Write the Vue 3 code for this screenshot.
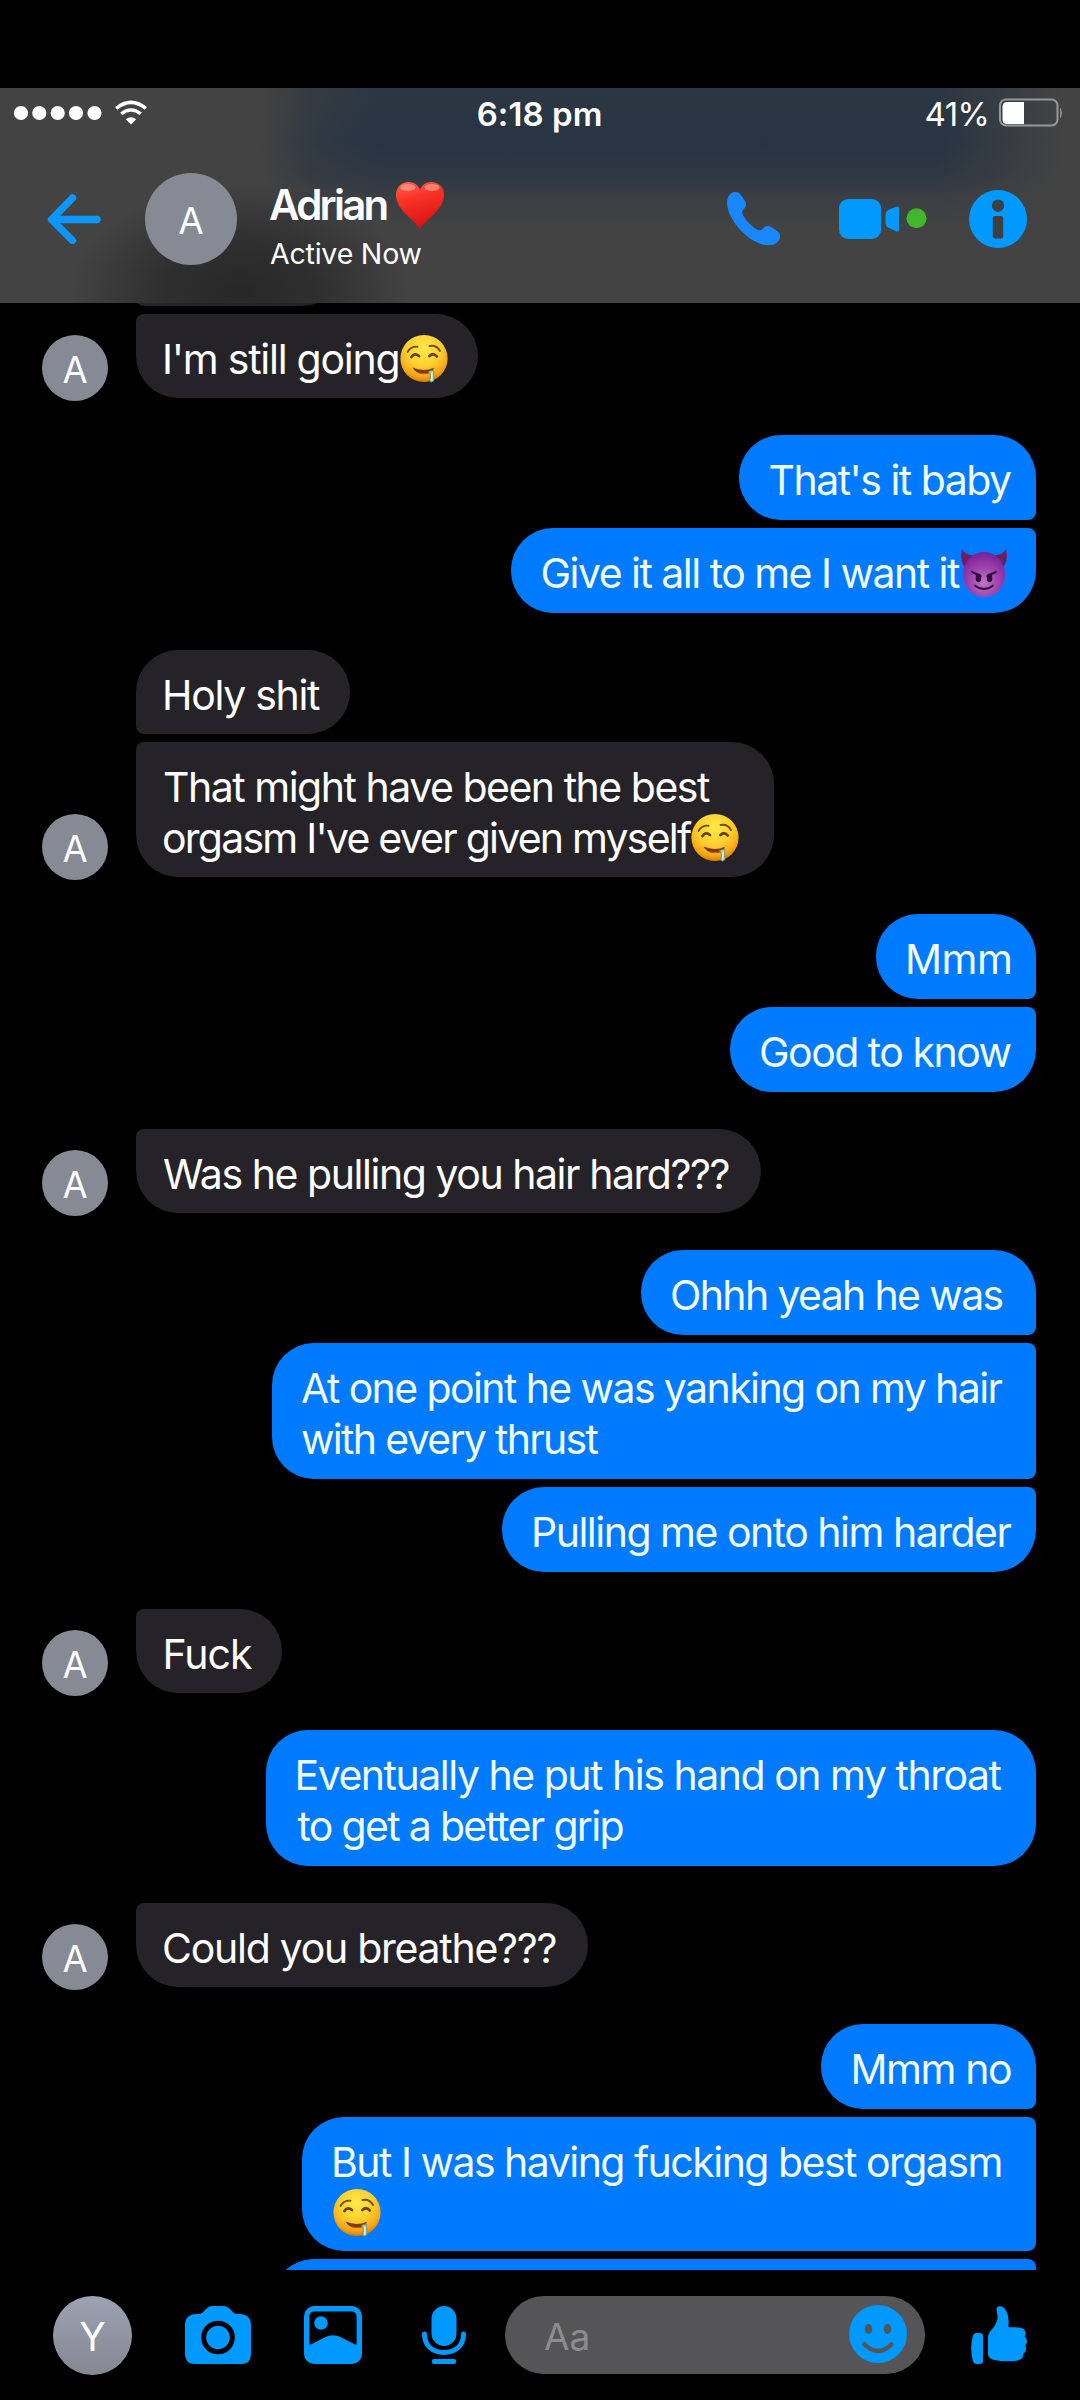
<script setup>
import { h } from 'vue'

const FAMILY = 'Inter, "Liberation Sans", sans-serif'
const ctx = document.createElement('canvas').getContext('2d')

// Tracking and side bearing that make a run of text span `width` pixels of ink.
function fit(text, width, size = 41, weight = 400) {
  ctx.font = `${weight} ${size}px ${FAMILY}`
  const m = ctx.measureText(text)
  const ink = m.actualBoundingBoxLeft + m.actualBoundingBoxRight
  const tracking = text.length > 1 ? (width - ink) / (text.length - 1) : 0
  return {
    letterSpacing: tracking.toFixed(3) + 'px',
    marginLeft: m.actualBoundingBoxLeft.toFixed(2) + 'px',
    marginRight: (-tracking).toFixed(3) + 'px'
  }
}

const groups = [
  {
    from: 'them',
    bubbles: [
      { w: 208, h: 84, cls: 'tail-both above', pad: 28, lines: [] },
      { w: 342, h: 84, cls: 'tail-top', pad: 29, lines: [{ t: "I'm still going", w: 232.5, e: 'drool' }] }
    ]
  },
  {
    from: 'me',
    bubbles: [
      { w: 297, h: 85, cls: 'tail-bottom', pad: 30.5, lines: [{ t: "That's it baby", w: 241.5 }] },
      { w: 525, h: 85, cls: 'tail-top', pad: 31.5, lines: [{ t: 'Give it all to me I want it', w: 417.5, e: 'devil' }] }
    ]
  },
  {
    from: 'them',
    bubbles: [
      { w: 214, h: 84, cls: 'tail-bottom', pad: 29, lines: [{ t: 'Holy shit', w: 155 }] },
      {
        w: 638, h: 135, cls: 'tail-top', pad: 28,
        lines: [
          { t: 'That might have been the best', w: 546 },
          { t: "orgasm I've ever given myself", w: 528, e: 'drool' }
        ]
      }
    ]
  },
  {
    from: 'me',
    bubbles: [
      { w: 160, h: 85, cls: 'tail-bottom', pad: 32, lines: [{ t: 'Mmm', w: 102 }] },
      { w: 306, h: 85, cls: 'tail-top', pad: 31, lines: [{ t: 'Good to know', w: 250.5 }] }
    ]
  },
  {
    from: 'them',
    bubbles: [{ w: 625, h: 84, cls: 'tail-top', pad: 28, lines: [{ t: 'Was he pulling you hair hard???', w: 564.5 }] }]
  },
  {
    from: 'me',
    bubbles: [
      { w: 395, h: 85, cls: 'tail-bottom', pad: 31, lines: [{ t: 'Ohhh yeah he was', w: 330.5 }] },
      {
        w: 764, h: 136, cls: 'tail-both', pad: 30,
        lines: [
          { t: 'At one point he was yanking on my hair', w: 700.5 },
          { t: 'with every thrust', w: 296.5 }
        ]
      },
      { w: 534, h: 85, cls: 'tail-top', pad: 32, lines: [{ t: 'Pulling me onto him harder', w: 477.5 }] }
    ]
  },
  {
    from: 'them',
    bubbles: [{ w: 145.5, h: 84, cls: 'tail-top', pad: 29.5, lines: [{ t: 'Fuck', w: 86.5 }] }]
  },
  {
    from: 'me',
    bubbles: [
      {
        w: 770, h: 136, cls: '', pad: 31.5,
        lines: [
          { t: 'Eventually he put his hand on my throat', w: 704 },
          { t: 'to get a better grip', w: 326 }
        ]
      }
    ]
  },
  {
    from: 'them',
    bubbles: [{ w: 452, h: 84, cls: 'tail-top', pad: 28, lines: [{ t: 'Could you breathe???', w: 391.5 }] }]
  },
  {
    from: 'me',
    bubbles: [
      { w: 215, h: 85, cls: 'tail-bottom', pad: 32.5, lines: [{ t: 'Mmm no', w: 157.5 }] },
      {
        w: 734, h: 134, cls: 'tail-both', pad: 32,
        lines: [
          { t: 'But I was having fucking best orgasm', w: 666.5 },
          { t: '', w: 0, e: 'drool' }
        ]
      },
      { w: 764, h: 85, cls: 'tail-both', pad: 31, lines: [] }
    ]
  }
]

const DroolFace = () =>
  h('svg', { viewBox: '0 0 48 48', width: 48, height: 49 }, [
    h('circle', { cx: 24, cy: 24, r: 23.6, fill: 'url(#faceFill)' }),
    h('g', { fill: 'none', stroke: '#7a4a08', 'stroke-width': 1.9, 'stroke-linecap': 'round' }, [
      h('path', { d: 'M7.5 17.5 Q11 11.5 17.5 12.2' }),
      h('path', { d: 'M29.5 11.5 Q36.5 10 40 16.5' })
    ]),
    h('g', { fill: 'none', stroke: '#6b3f08', 'stroke-width': 2.8, 'stroke-linecap': 'round' }, [
      h('path', { d: 'M11.5 22.5 Q14.5 17.8 19 21.5' }),
      h('path', { d: 'M29.5 21.5 Q33.5 17.8 36.8 22' })
    ]),
    h('path', { d: 'M12.5 33 Q23.5 37.8 34 33.2 Q32.5 39.6 23.5 39.6 Q15.5 39.2 12.5 33Z', fill: '#7a3d08' }),
    h('path', { d: 'M17 37.4 Q24 39.4 30 37.4 Q27 39.8 23 39.8 Q19.5 39.4 17 37.4Z', fill: '#c8503c' }),
    h('path', { d: 'M28.5 37 Q31 35.5 33.8 36 Q33.5 40 34 46 Q31.5 49 29.5 46.5 Q31 42 30 39.5Z', fill: '#a9c6a8', stroke: '#6f8a6a', 'stroke-width': 0.7 }),
    h('path', { d: 'M32 38 L31.8 46', stroke: '#f3fff8', 'stroke-width': 1.2 })
  ])

const DevilFace = () =>
  h('svg', { viewBox: '0 0 51 50', width: 50, height: 50 }, [
    h('path', { d: 'M3 1 Q7 7 16 7 L7 20 Q0 13 3 1Z', fill: '#6d1d60' }),
    h('path', { d: 'M48 1 Q44 7 35 7 L44 20 Q51 13 48 1Z', fill: '#6d1d60' }),
    h('ellipse', { cx: 25.5, cy: 26.5, rx: 21.5, ry: 23, fill: 'url(#devilFill)' }),
    h('g', { fill: 'none', stroke: '#35083c', 'stroke-width': 2.2, 'stroke-linecap': 'round' }, [
      h('path', { d: 'M13.5 24 L22 28' }),
      h('path', { d: 'M37.5 24 L29 28' }),
      h('path', { d: 'M16.5 38 Q25.5 45 34.5 38' })
    ]),
    h('ellipse', { cx: 19.8, cy: 30, rx: 2.8, ry: 4.4, fill: '#35083c' }),
    h('ellipse', { cx: 31.2, cy: 30, rx: 2.8, ry: 4.4, fill: '#35083c' })
  ])

const faces = { drool: DroolFace, devil: DevilFace }
</script>

<template>
  <div class="screen">
    <svg class="defs" width="0" height="0">
      <defs>
        <radialGradient id="faceFill" cx="0.48" cy="0.3" r="0.72">
          <stop offset="0" stop-color="#ffe94a" />
          <stop offset="0.5" stop-color="#ffd02e" />
          <stop offset="0.82" stop-color="#f7a415" />
          <stop offset="1" stop-color="#cf7206" />
        </radialGradient>
        <radialGradient id="devilFill" cx="0.5" cy="0.68" r="0.66">
          <stop offset="0" stop-color="#bd78c6" />
          <stop offset="0.5" stop-color="#9f45b0" />
          <stop offset="1" stop-color="#7c2096" />
        </radialGradient>
        <linearGradient id="heartFill" x1="0" y1="0" x2="0.3" y2="1">
          <stop offset="0" stop-color="#ff6a55" />
          <stop offset="0.4" stop-color="#fb3327" />
          <stop offset="1" stop-color="#d81414" />
        </linearGradient>
      </defs>
    </svg>

    <header class="header">
      <div class="status">
        <svg class="signal" width="150" height="28" viewBox="0 0 150 28">
          <g fill="#fff">
            <circle cx="21" cy="13" r="7.1" /><circle cx="39.3" cy="13" r="7.1" />
            <circle cx="57.7" cy="13" r="7.1" /><circle cx="76" cy="13" r="7.1" />
            <circle cx="94.5" cy="13" r="7.1" />
            <path d="M131 24.6 L125.8 19.3 Q131 15.3 136.2 19.3Z" />
          </g>
          <g fill="none" stroke="#fff" stroke-width="3.6">
            <path d="M116.2 8.3 Q131 -3.7 145.8 8.3" />
            <path d="M121.2 13.8 Q131 6.2 140.8 13.8" />
          </g>
        </svg>
        <span class="time"><span :style="fit('6:18 pm', 123, 33, 600)">6:18 pm</span></span>
        <div class="power">
          <span class="percent" :style="fit('41%', 61, 33)">41%</span>
          <svg width="64" height="30" viewBox="0 0 64 30">
            <rect x="1" y="1.5" width="57.5" height="26" rx="6" fill="none" stroke="#98989b" stroke-width="2" />
            <path d="M8 4 H25 V26 H8 Q3.5 26 3.5 21.5 V8.5 Q3.5 4 8 4Z" fill="#fff" />
            <path d="M61.5 10.5 Q63.5 15 61.5 19.5Z" fill="#98989b" stroke="#98989b" stroke-width="0.8" />
          </svg>
        </div>
      </div>

      <div class="contact">
        <svg class="back" width="54" height="50" viewBox="0 0 54 50">
          <path d="M50 25.5 H5 M25.500 4 L4.500 25.500 L25.500 46.500" fill="none" stroke="#0d96fb" stroke-width="7.4" stroke-linecap="round" stroke-linejoin="round" />
        </svg>
        <div class="avatar large"><span>A</span></div>
        <div class="who">
          <div class="name">
            <span :style="fit('Adrian', 116.5, 42, 600)">Adrian</span>
            <svg class="heart" width="50" height="49" viewBox="0 0 50 49">
              <path d="M25 48 C20 39 1 29 1 14 C1 6 7 1 13.5 1 C19 1 23 4 25 8.5 C27 4 31 1 36.5 1 C43 1 49 6 49 14 C49 29 30 39 25 48Z" fill="url(#heartFill)" />
              <ellipse cx="13" cy="6.5" rx="7.5" ry="3.6" fill="#ff9d8a" opacity="0.7" />
              <ellipse cx="37" cy="6.5" rx="7.5" ry="3.6" fill="#ff9d8a" opacity="0.7" />
            </svg>
          </div>
          <div class="presence"><span :style="fit('Active Now', 151.5, 28.5)">Active Now</span></div>
        </div>
        <div class="calls">
          <svg class="phone" width="54" height="54" viewBox="0 0 54 54">
            <path d="M4 1.5 C7 -0.8 11.5 -0.3 14 3 L18 9 C20 12.5 19 15 16.5 17.5 C14.5 19.5 15 21.5 16.5 24 C20 29.5 24.5 34.5 30 37.5 C32.500 39 34.500 38.500 36 36.500 C38.500 33.500 42 33.500 45 35.500 L50.500 39.300 C54 42 54 46 51 49.500 C47.500 53.500 41 54.500 34 52 C17 46.500 0.500 26 0 11 C0 7 1 3.700 4 1.500Z" fill="#1a86ff" />
          </svg>
          <svg class="video" width="88" height="42" viewBox="0 0 88 42">
            <rect width="42" height="40" rx="9" y="1" fill="#0099ff" />
            <path d="M49 12 L57 8.8 Q60 7.800 60 10 V32 Q60 34.200 57 33.200 L49 29.500 Q46.500 28 46.500 25 V17 Q46.500 13.500 49 12Z" fill="#0099ff" />
            <circle cx="77.5" cy="20.3" r="10" fill="#43b62e" />
          </svg>
          <svg class="info" width="58" height="58" viewBox="0 0 58 58">
            <circle cx="29" cy="29" r="29" fill="#0099ff" />
            <circle cx="29" cy="15.7" r="6.2" fill="#3c4043" />
            <rect x="23.8" y="26" width="10.4" height="22.5" rx="2" fill="#3c4043" />
          </svg>
        </div>
      </div>
    </header>

    <main class="thread">
      <section v-for="(g, gi) in groups" :key="gi" class="group" :class="g.from">
        <div v-if="g.from === 'them'" class="avatar small"><span>A</span></div>
        <div class="stack">
          <div
            v-for="(b, bi) in g.bubbles"
            :key="bi"
            class="bubble"
            :class="b.cls"
            :style="{ width: b.w + 'px', height: b.h + 'px', paddingLeft: b.pad + 'px' }"
          >
            <div v-for="(l, li) in b.lines" :key="li" class="line">
              <span v-if="l.t" :style="fit(l.t, l.w)">{{ l.t }}</span>
              <component :is="faces[l.e]" v-if="l.e" class="face" :class="{ lead: !l.t }" />
            </div>
          </div>
        </div>
      </section>
    </main>

    <footer class="composer">
      <div class="avatar self"><span>Y</span></div>
      <svg class="camera" width="66" height="58" viewBox="0 0 66 58">
        <path d="M11 8 C17 8.5 18 6 20.5 3.5 C23 1 25 0 28 0 H38 C41 0 43 1 45.5 3.5 C48 6 49 8.5 55 8 C62 8.5 66 12 66 19 V48 Q66 58 56 58 H10 Q0 58 0 48 V19 C0 12 4 8.5 11 8Z" fill="#0099ff" />
        <circle cx="33" cy="31.5" r="14.3" fill="none" stroke="#000" stroke-width="5" />
      </svg>
      <svg class="photo" width="58" height="58" viewBox="0 0 58 58">
        <rect x="2.7" y="2.7" width="52.6" height="52.6" rx="7.5" fill="none" stroke="#0099ff" stroke-width="5.4" />
        <circle cx="17" cy="17" r="6.8" fill="#0099ff" />
        <path d="M4 38.5 H7 L21 31.3 Q29 27 37 31.3 L51 38.5 H54 V48 Q54 55 47 55 H11 Q4 55 4 48Z" fill="#0099ff" />
      </svg>
      <svg class="mic" width="44" height="58" viewBox="0 0 44 58">
        <rect x="9.5" width="25" height="40" rx="12.5" fill="#0099ff" />
        <path d="M2.5 28 C2.5 40 11 46.5 22 46.5 C33 46.5 41.5 40 41.5 28" fill="none" stroke="#0099ff" stroke-width="5" stroke-linecap="round" />
        <rect x="10" y="53" width="24" height="5" rx="2" fill="#0099ff" />
      </svg>
      <div class="field">
        <span class="placeholder" :style="fit('Aa', 43.5, 37)">Aa</span>
        <svg class="smile" width="58" height="58" viewBox="0 0 58 58">
          <circle cx="29" cy="29" r="29" fill="#0099ff" />
          <ellipse cx="19.5" cy="24" rx="3.8" ry="5" fill="#555558" />
          <ellipse cx="38.5" cy="24" rx="3.8" ry="5" fill="#555558" />
          <path d="M15.500 39.500 Q29 52.500 42.500 39.500" fill="none" stroke="#555558" stroke-width="4.5" stroke-linecap="round" />
        </svg>
      </div>
      <svg class="like" width="56" height="58" viewBox="0 0 56 58">
        <path d="M5.5 27 H9 Q12 27 12 30 V55 Q12 58 9 58 H5.5 Q3 58 2 55.5 Q-1.5 43 1.8 30 Q2.8 27 5.5 27Z" fill="#0099ff" />
        <path d="M26 1.5 C27.5 -0.5 31 -0.3 33.5 2.5 C37 6.5 38.5 13 37.3 21.3 C43 21 48 21.2 51 22.3 C54.5 23.5 55.8 27.5 53.5 30.5 C56.5 32.5 56.8 37 54.3 39.5 C56 42 55 46 52.5 47.5 C52.5 51 50.5 54 46 54.7 C38 55.8 29 55.5 23.5 54 C19 53 17 51 17 47.5 V33 C17 26 20 25 23.5 20 C26.5 15.5 27 12 26.3 8 C25.8 5 25 3 26 1.5Z" fill="#0099ff" />
      </svg>
    </footer>
  </div>
</template>

<style>
body {
  background: #000;
}
</style>

<style scoped>
.screen {
  width: 1080px;
  height: 2400px;
  box-sizing: border-box;
  padding-top: 88px;
  background: #000;
  color: #fff;
  font-family: Inter, "Liberation Sans", sans-serif;
  font-size: 41px;
  display: flex;
  flex-direction: column;
  overflow: hidden;
  white-space: nowrap;
}
.defs {
  position: absolute;
}
svg {
  display: block;
  flex: none;
}
.header {
  height: 215px;
  flex: none;
  background:
    radial-gradient(ellipse 170px 110px at 240px 205px, rgba(38, 38, 38, 0.95), rgba(40, 40, 40, 0.75) 45%, rgba(67, 67, 67, 0) 100%),
    linear-gradient(90deg, #434343 24%, rgba(67, 67, 67, 0.35) 29%, rgba(67, 67, 67, 0) 35%, rgba(67, 67, 67, 0) 87%, #434343 98.5%),
    linear-gradient(180deg, #2c3742 0, #273443 26%, #2e3742 40%, #3a3e43 50%, #434343 66%);
}
.status {
  height: 52px;
  display: grid;
  grid-template-columns: 1fr auto 1fr;
  align-items: center;
}
.signal {
  margin-top: -1px;
}
.time {
  font-size: 33px;
  font-weight: 600;
  line-height: 52px;
}
.time span,
.name span,
.presence span {
  display: inline-block;
}
.power {
  display: flex;
  align-items: center;
  justify-content: flex-end;
  padding-right: 17px;
  font-size: 33px;
  line-height: 52px;
}
.power svg {
  margin-left: 9px;
  margin-top: -2px;
}
.contact {
  height: 158px;
  display: flex;
  align-items: center;
}
.back {
  margin-left: 47px;
}
.avatar {
  border-radius: 50%;
  background: #868a94;
  display: flex;
  justify-content: center;
  flex: none;
  font-weight: 400;
}
.large {
  width: 92px;
  height: 92px;
  margin-left: 44px;
  font-size: 37px;
  line-height: 95px;
}
.who {
  align-self: flex-start;
  margin-left: 33px;
  padding-top: 40px;
}
.name {
  display: flex;
  height: 50px;
  line-height: 50px;
  font-size: 42px;
  font-weight: 600;
}
.heart {
  margin: 1px 0 0 6px;
}
.presence {
  margin-top: 6px;
  line-height: 36px;
  font-size: 28.5px;
}
.calls {
  margin-left: auto;
  margin-right: 53px;
  display: flex;
  align-items: center;
}
.video {
  margin-left: 58px;
}
.info {
  margin-left: 42px;
}
.thread {
  height: 1967px;
  flex: none;
  box-sizing: border-box;
  padding: 0 44px 0 42px;
  display: flex;
  flex-direction: column;
  gap: 37px;
  overflow: hidden;
}
.group {
  display: flex;
  align-items: flex-end;
  flex: none;
}
.stack {
  display: flex;
  flex-direction: column;
  gap: 8px;
}
.me {
  justify-content: flex-end;
}
.me .stack {
  align-items: flex-end;
}
.small {
  width: 66px;
  height: 66px;
  margin-right: 28px;
  margin-bottom: -3px;
  font-size: 36.5px;
  line-height: 71px;
}
.bubble {
  box-sizing: border-box;
  padding-top: 20px;
  border-radius: 42px;
}
.above {
  margin-top: -81px;
}
.them .bubble {
  background: #252328;
}
.me .bubble {
  background: #007aff;
  color: #f0fbff;
}
.them .tail-top {
  border-top-left-radius: 8px;
}
.them .tail-bottom {
  border-bottom-left-radius: 8px;
}
.them .tail-both {
  border-top-left-radius: 8px;
  border-bottom-left-radius: 8px;
}
.me .tail-top {
  border-top-right-radius: 8px;
}
.me .tail-bottom {
  border-bottom-right-radius: 8px;
}
.me .tail-both {
  border-top-right-radius: 8px;
  border-bottom-right-radius: 8px;
}
.line {
  display: flex;
  height: 51px;
  line-height: 51px;
}
.face {
  margin: 0 0 0 -1px;
}
.face.lead {
  margin-left: -1px;
}
.composer {
  flex: 1;
  display: flex;
  align-items: center;
  padding: 0 53px;
}
.self {
  width: 79px;
  height: 79px;
  background: linear-gradient(180deg, #9ca2b2, #858892);
  font-size: 39px;
  line-height: 81px;
}
.camera {
  margin-left: 53px;
}
.photo {
  margin-left: 53px;
}
.mic {
  margin-left: 60px;
}
.field {
  width: 420px;
  height: 78px;
  box-sizing: border-box;
  margin-left: 39px;
  padding: 0 18px 0 39px;
  border-radius: 39px;
  background: #555558;
  display: flex;
  align-items: center;
  justify-content: space-between;
}
.placeholder {
  font-size: 37px;
  line-height: 82px;
  padding-top: 3px;
  color: #8d8d90;
}
.smile {
  margin-top: -2px;
}
.like {
  margin-left: 46px;
}
</style>
